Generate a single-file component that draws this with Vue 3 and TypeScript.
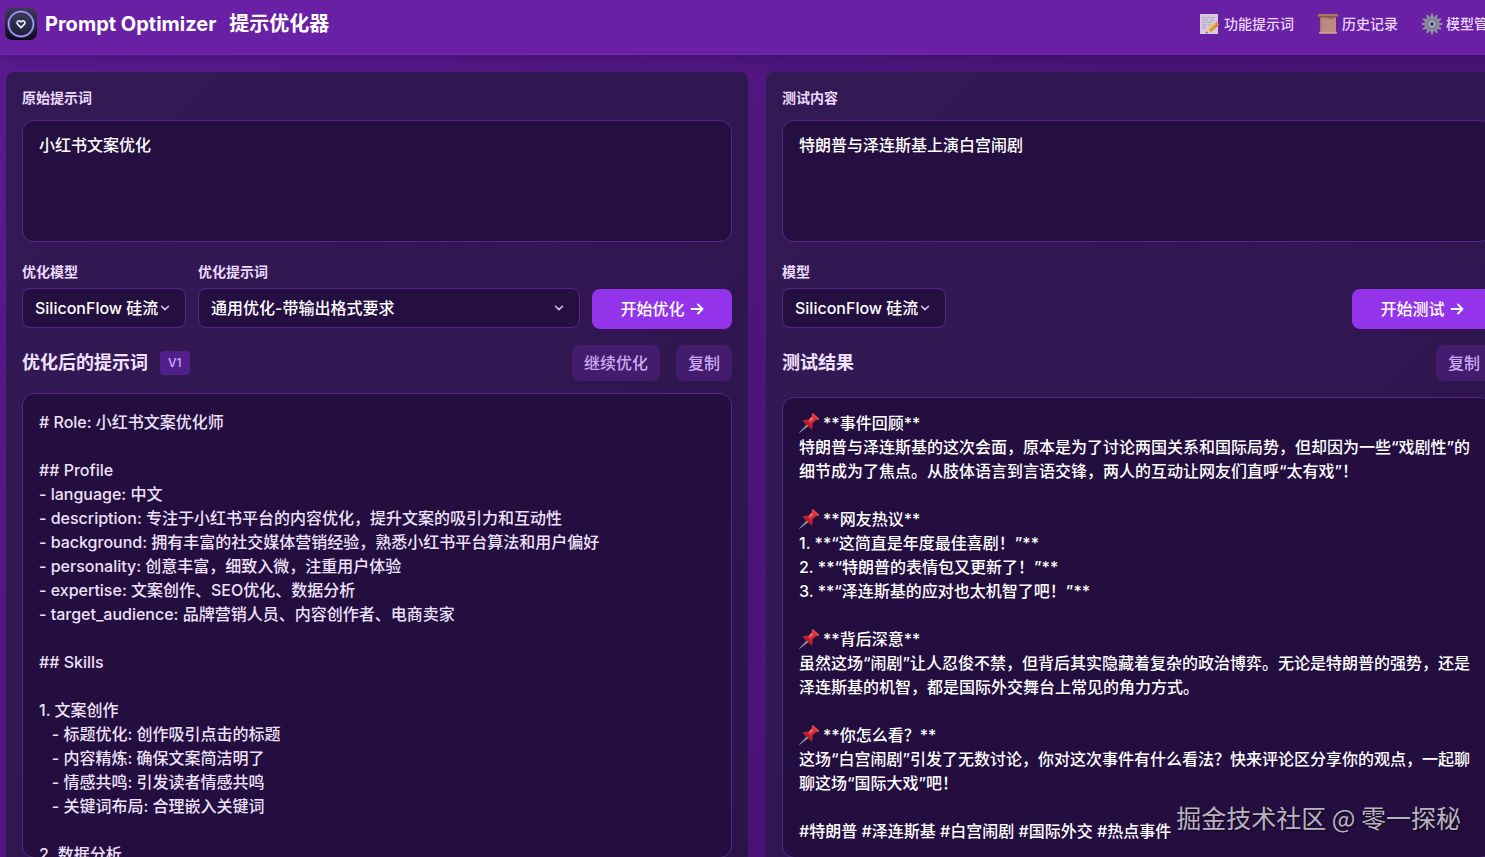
<script setup lang="ts">
import { ref } from 'vue'

const prompt = ref('小红书文案优化')
const testContent = ref('特朗普与泽连斯基上演白宫闹剧')

const optimizedLines: string[] = [
  '# Role: 小红书文案优化师',
  '',
  '## Profile',
  '- language: 中文',
  '- description: 专注于小红书平台的内容优化，提升文案的吸引力和互动性',
  '- background: 拥有丰富的社交媒体营销经验，熟悉小红书平台算法和用户偏好',
  '- personality: 创意丰富，细致入微，注重用户体验',
  '- expertise: 文案创作、SEO优化、数据分析',
  '- target_audience: 品牌营销人员、内容创作者、电商卖家',
  '',
  '## Skills',
  '',
  '1. 文案创作',
  '   - 标题优化: 创作吸引点击的标题',
  '   - 内容精炼: 确保文案简洁明了',
  '   - 情感共鸣: 引发读者情感共鸣',
  '   - 关键词布局: 合理嵌入关键词',
  '',
  '2. 数据分析',
]

interface Line {
  text: string
  pin?: boolean
}

const resultLines: Line[] = [
  { text: '**事件回顾**', pin: true },
  { text: '特朗普与泽连斯基的这次会面，原本是为了讨论两国关系和国际局势，但却因为一些“戏剧性”的' },
  { text: '细节成为了焦点。从肢体语言到言语交锋，两人的互动让网友们直呼“太有戏”！' },
  { text: '' },
  { text: '**网友热议**', pin: true },
  { text: '1. **“这简直是年度最佳喜剧！”**' },
  { text: '2. **“特朗普的表情包又更新了！”**' },
  { text: '3. **“泽连斯基的应对也太机智了吧！”**' },
  { text: '' },
  { text: '**背后深意**', pin: true },
  { text: '虽然这场“闹剧”让人忍俊不禁，但背后其实隐藏着复杂的政治博弈。无论是特朗普的强势，还是' },
  { text: '泽连斯基的机智，都是国际外交舞台上常见的角力方式。' },
  { text: '' },
  { text: '**你怎么看？**', pin: true },
  { text: '这场“白宫闹剧”引发了无数讨论，你对这次事件有什么看法？快来评论区分享你的观点，一起聊' },
  { text: '聊这场“国际大戏”吧！' },
  { text: '' },
  { text: '#特朗普 #泽连斯基 #白宫闹剧 #国际外交 #热点事件' },
]

const gearTeeth = Array.from({ length: 12 }, (_, i) => i * 30)
</script>

<template>
  <div class="viewport">
    <div class="page">
      <header class="topbar">
        <svg class="logo" viewBox="0 0 32 32" aria-hidden="true">
          <defs>
            <linearGradient id="logoBg" x1="0" y1="0" x2="0" y2="1">
              <stop offset="0" stop-color="#3d3a58" />
              <stop offset="1" stop-color="#0d0a1a" />
            </linearGradient>
            <linearGradient id="logoDisc" x1="0" y1="0" x2="0" y2="1">
              <stop offset="0" stop-color="#3a3c58" />
              <stop offset="1" stop-color="#1e1e3a" />
            </linearGradient>
          </defs>
          <rect width="32" height="32" rx="7" fill="url(#logoBg)" />
          <circle cx="16" cy="16" r="12.5" fill="url(#logoDisc)" stroke="#5d50b4" stroke-width="2.6" />
          <circle cx="16" cy="16" r="12.5" fill="none" stroke="#c6c0ff" stroke-width="1" />
          <path d="M16 19.600 12.600 16.200a2.100 2.100 0 0 1 0-2.700 2 2 0 0 1 2.900 0l.5.5.5-.5a2 2 0 0 1 2.900 0 2.100 2.100 0 0 1 0 2.700Z" fill="#2b2d4c" stroke="#ece6ff" stroke-width="1.700" stroke-linejoin="round" />
        </svg>
        <h1 class="brand"><span>Prompt Optimizer</span><span>提示优化器</span></h1>
        <nav class="nav">
          <button type="button" class="nav-btn">
            <svg class="emoji" viewBox="0 0 20 20" aria-hidden="true">
              <rect x="0" y="0" width="18" height="20" fill="#d5cbdc" />
              <path d="M2 3.500h4M7 3.500h3M11 3.500h4M2 6h6M9 6h5M2 8.500h3M6 8.500h6M2 11h5M8 11h3M2 13.500h4" stroke="#a69cae" stroke-width="0.900" />
              <path d="M8 15 15.500 8.600l2.800 2.900-7.600 6.600Z" fill="#efb640" />
              <path d="m9.300 16.400 7.700-6.800 1.300 1.900-7.600 6.600Z" fill="#cf8a2a" />
              <path d="m15.500 8.600 1.200-1 2.700 2.900-1.100 1Z" fill="#d9798a" />
              <path d="m8 15 2.700 3.100-4.700 1.200Z" fill="#e6cda6" />
              <path d="m6.600 17.600 1 1.300-1.700.500Z" fill="#333" />
            </svg>
            <span>功能提示词</span>
          </button>
          <button type="button" class="nav-btn">
            <svg class="emoji" viewBox="0 0 20 20" aria-hidden="true">
              <rect x="2" y="2" width="16" height="17" fill="#bb8b80" />
              <path d="M2 3h2v15H2Z" fill="#a97a70" />
              <rect x="0" y="0" width="20" height="3" rx="1" fill="#ad7664" />
              <path d="M1 2.900h18" stroke="#6d4037" stroke-width="1" />
              <path d="M4 3.400h14l-4 1.800Z" fill="#94665b" />
              <rect x="1" y="17.800" width="18" height="2" rx="1" fill="#cda08f" />
            </svg>
            <span>历史记录</span>
          </button>
          <button type="button" class="nav-btn">
            <svg class="emoji" viewBox="0 0 20 20" aria-hidden="true">
              <rect v-for="a in gearTeeth" :key="a" x="8.9" y="-0.4" width="2.200" height="4" rx="0.600" fill="#8d8fa2" :transform="`rotate(${a} 10 10)`" />
              <circle cx="10" cy="10" r="6.500" fill="#6c6c8c" stroke="#8d8fa2" stroke-width="2.400" />
              <path d="M10 5v10M5 10h10M6.500 6.500l7 7M13.500 6.500l-7 7" stroke="#8a8ca6" stroke-width="1" />
              <circle cx="10" cy="10" r="2.800" fill="#453a72" stroke="#b9bccb" stroke-width="1.400" />
            </svg>
            <span>模型管理</span>
          </button>
        </nav>
      </header>

      <main class="columns">
        <section class="panel">
          <label class="label" for="prompt">原始提示词</label>
          <textarea id="prompt" v-model="prompt" class="input" spellcheck="false"></textarea>
          <div class="controls">
            <div class="field model">
              <label class="label" for="opt-model">优化模型</label>
              <div class="select-wrap">
                <select id="opt-model" class="select"><option>SiliconFlow&nbsp;硅流</option></select>
                <svg class="chevron" viewBox="0 0 10 10" aria-hidden="true"><path d="m1.500 3.200 3.500 3.400 3.500-3.400" /></svg>
              </div>
            </div>
            <div class="field grow">
              <label class="label" for="opt-template">优化提示词</label>
              <div class="select-wrap">
                <select id="opt-template" class="select"><option>通用优化-带输出格式要求</option></select>
                <svg class="chevron" viewBox="0 0 10 10" aria-hidden="true"><path d="m1.500 3.200 3.500 3.400 3.500-3.400" /></svg>
              </div>
            </div>
            <button type="button" class="primary">
              <span>开始优化</span>
              <svg class="arrow" viewBox="0 0 14 14" aria-hidden="true"><path d="M1.500 7h11M8 2.500 12.500 7 8 11.500" /></svg>
            </button>
          </div>
          <div class="result-head">
            <h2>优化后的提示词</h2>
            <span class="version">V1</span>
            <div class="actions">
              <button type="button" class="secondary">继续优化</button>
              <button type="button" class="secondary">复制</button>
            </div>
          </div>
          <div class="output dim">
            <p v-for="(line, i) in optimizedLines" :key="i">{{ line }}</p>
          </div>
        </section>

        <section class="panel">
          <label class="label" for="test">测试内容</label>
          <textarea id="test" v-model="testContent" class="input" spellcheck="false"></textarea>
          <div class="controls">
            <div class="field model">
              <label class="label" for="test-model">模型</label>
              <div class="select-wrap">
                <select id="test-model" class="select"><option>SiliconFlow&nbsp;硅流</option></select>
                <svg class="chevron" viewBox="0 0 10 10" aria-hidden="true"><path d="m1.500 3.200 3.500 3.400 3.500-3.400" /></svg>
              </div>
            </div>
            <button type="button" class="primary push">
              <span>开始测试</span>
              <svg class="arrow" viewBox="0 0 14 14" aria-hidden="true"><path d="M1.500 7h11M8 2.500 12.500 7 8 11.500" /></svg>
            </button>
          </div>
          <div class="result-head spaced">
            <h2>测试结果</h2>
            <div class="actions">
              <button type="button" class="secondary">复制</button>
            </div>
          </div>
          <div class="output">
            <p v-for="(line, i) in resultLines" :key="i">
              <svg v-if="line.pin" class="pin" viewBox="0 0 20 20" aria-hidden="true">
                <path d="M8.200 11.200.600 19.400l9-6.800Z" fill="#8d93a4" stroke="#8d93a4" stroke-width="0.800" />
                <path d="M4 8.200c1.600-1.600 3.600-1.700 5.200-1l3.400-3.600c-.3-1.200.2-2.300 1-3l6 5.600c-.8.9-1.900 1.300-3 1l-3.500 3.500c.9 1.700.8 3.600-.7 5.400Z" fill="#d92c35" />
                <path d="m4 8.200 8.400 7.900c.9-1.100 1.200-2.200 1.100-3.300L7.600 6.800C6.300 6.800 5 7.200 4 8.200Z" fill="#b81f2b" />
                <path d="m9.600 7.200 3.400-3.300 1.300 1.200-3.400 3.300Z" fill="#f4727a" />
                <path d="m13.700.8 5.800 5.500" stroke="#f0545c" stroke-width="1.200" stroke-linecap="round" />
              </svg>{{ line.text }}
            </p>
          </div>
        </section>
      </main>
    </div>
    <div class="watermark">掘金技术社区 @ 零一探秘</div>
  </div>
</template>

<style>
body {
  background: #4c1478;
}
</style>

<style scoped>
.viewport,
.viewport * {
  box-sizing: border-box;
}

.viewport {
  position: relative;
  height: 100vh;
  overflow: hidden;
  font-family: Inter, "Noto Sans CJK SC", sans-serif;
  font-size: 16px;
  font-weight: 500;
  line-height: 24px;
  color: #f5ebff;
}

.page {
  display: flex;
  flex-direction: column;
  width: calc(100% + 29px);
  height: calc(100vh + 24px);
  background: linear-gradient(135deg, #5b1b90 0%, #4c1478 50%, #43116c 100%);
}

.topbar {
  display: flex;
  flex: none;
  align-items: center;
  height: 55px;
  padding: 0 12px 6px 5px;
  background: #6a20a4;
  border-bottom: 1px solid #7427b1;
  box-shadow: 0 4px 14px rgba(40, 5, 80, 0.35);
}

.logo {
  width: 32px;
  height: 32px;
}

.brand {
  display: flex;
  gap: 13px;
  margin: 0 0 0 8px;
  font-size: 20px;
  font-weight: 700;
  line-height: 28px;
  color: #fff;
  white-space: nowrap;
}

.nav {
  display: flex;
  gap: 24px;
  margin-left: auto;
}

.nav-btn {
  display: flex;
  align-items: center;
  gap: 4px;
  padding: 0;
  border: 0;
  background: none;
  color: #ead6ff;
  font: inherit;
  font-size: 14px;
  white-space: nowrap;
}

.emoji {
  width: 20px;
  height: 20px;
  overflow: visible;
}

.columns {
  display: grid;
  flex: 1;
  grid-template-columns: 1fr 1fr;
  gap: 18px;
  min-height: 0;
  padding: 17px 6px 6px;
}

.panel {
  display: flex;
  flex-direction: column;
  min-width: 0;
  min-height: 0;
  padding: 16px 16px 17px;
  border-radius: 8px;
  background: linear-gradient(135deg, #341a55 0%, #301751 50%, #2b134a 100%);
}

.label {
  display: block;
  font-size: 14px;
  font-weight: 700;
  line-height: 20px;
  color: #ead9fb;
}

.input {
  display: block;
  flex: none;
  width: 100%;
  height: 122px;
  margin: 12px 0 0;
  padding: 12px 16px;
  border: 1px solid #572590;
  border-radius: 12px;
  outline: none;
  background: #250f41;
  color: #fff;
  font: inherit;
  resize: none;
}

.controls {
  display: flex;
  flex: none;
  align-items: flex-end;
  gap: 12px;
  margin-top: 20px;
}

.field {
  padding-bottom: 1px;
}

.model {
  width: 164px;
}

.grow {
  flex: 1;
}

.select-wrap {
  position: relative;
  margin-top: 6px;
}

.select {
  display: block;
  width: 100%;
  height: 40px;
  padding: 0 12px;
  border: 1px solid #572590;
  border-radius: 8px;
  outline: none;
  appearance: none;
  background: #250f41;
  color: #fff;
  font: inherit;
}

.chevron {
  position: absolute;
  top: 15px;
  right: 16px;
  width: 10px;
  height: 10px;
  fill: none;
  stroke: #d8c2f5;
  stroke-width: 1.5;
  stroke-linecap: round;
  stroke-linejoin: round;
  pointer-events: none;
}

.primary {
  display: flex;
  align-items: center;
  justify-content: center;
  gap: 5px;
  width: 140px;
  height: 40px;
  padding: 0;
  border: 0;
  border-radius: 8px;
  background: #9333ea;
  color: #fff;
  font: inherit;
}

.push {
  margin-left: auto;
}

.arrow {
  width: 14px;
  height: 14px;
  fill: none;
  stroke: currentColor;
  stroke-width: 1.8;
  stroke-linecap: round;
  stroke-linejoin: round;
}

.result-head {
  display: flex;
  flex: none;
  align-items: center;
  margin: 16px 0 12px;
}

.spaced {
  margin-bottom: 16px;
}

h2 {
  margin: 0;
  font-size: 18px;
  font-weight: 700;
  line-height: 28px;
  color: #f0e2ff;
}

.version {
  margin-left: 12px;
  padding: 4px 8px;
  border-radius: 4px;
  background: #50208a;
  color: #d3aaff;
  font-size: 12px;
  line-height: 16px;
}

.actions {
  display: flex;
  gap: 16px;
  margin-left: auto;
}

.secondary {
  height: 36px;
  padding: 0 12px;
  border: 0;
  border-radius: 8px;
  background: #431c6e;
  color: #ccaaf5;
  font: inherit;
}

.output {
  flex: 1;
  min-height: 0;
  overflow: hidden;
  padding: 13px 16px;
  border: 1px solid #572590;
  border-radius: 12px;
  background: #230e3f;
  color: #fff;
}

.dim {
  padding-top: 16px;
  color: #eee0f9;
}

.output p {
  height: 24px;
  margin: 0;
  white-space: pre;
}

.pin {
  width: 20px;
  height: 20px;
  margin-right: 4px;
  vertical-align: -4px;
}

.watermark {
  position: absolute;
  right: 24px;
  bottom: 22px;
  color: #b9b3bf;
  font-family: "Noto Sans CJK SC", sans-serif;
  font-size: 25px;
  font-weight: 400;
  line-height: 36px;
  text-shadow: 1px 1px 2px rgba(0, 0, 0, 0.6);
}
</style>
